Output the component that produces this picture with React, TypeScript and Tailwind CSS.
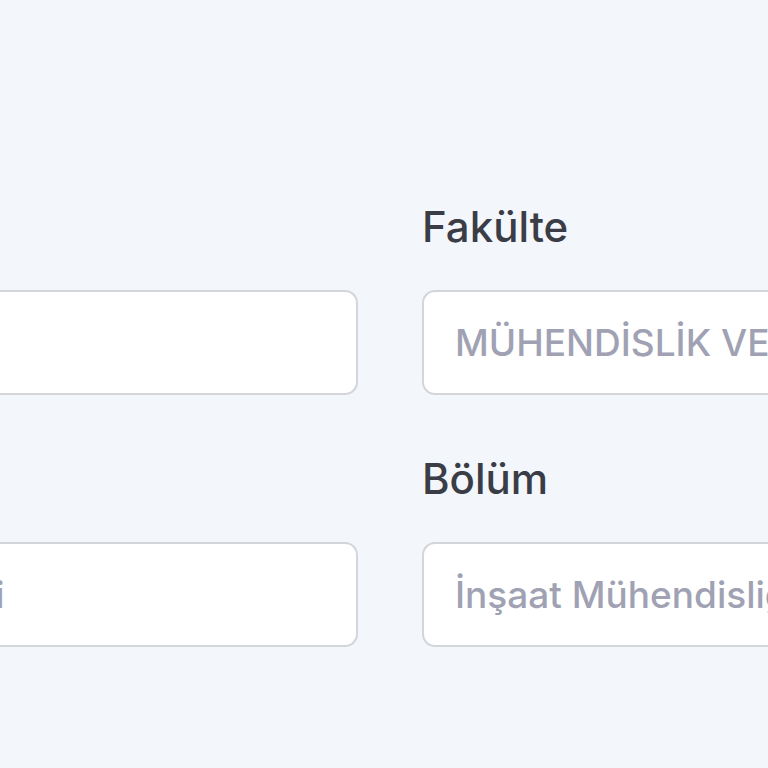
export default function App() {
  const fields = [
    { label: "Öğrenci Numarası", placeholder: "" },
    { label: "Fakülte", placeholder: "MÜHENDİSLİK VE DOĞA BİLİMLERİ FAKÜLTESİ" },
    { label: "Üniversite", placeholder: "Sakarya Üniversitesi" },
    { label: "Bölüm", placeholder: "İnşaat Mühendisliği" },
  ];

  return (
    <div
      className="min-h-[768px] w-[768px] overflow-hidden bg-[#f3f6fa]"
      style={{ fontFamily: "Inter, 'Noto Sans', sans-serif" }}
    >
      <div className="-ml-[390px] grid w-[1560px] grid-cols-2 gap-x-[64px] gap-y-[54px] pt-[197px]">
        {fields.map((f) => (
          <div key={f.label} className="flex flex-col gap-[33px]">
            <label className="text-[42px] leading-[60px] font-medium text-[#3a3d46]">
              {f.label}
            </label>
            <input
              placeholder={f.placeholder}
              className="h-[105px] w-full rounded-[13px] border-[2.5px] border-[#d3d5db] bg-white px-[31px] text-[37px] font-medium text-[#3a3d46] placeholder:text-[#a0a2b4] focus:outline-none"
            />
          </div>
        ))}
      </div>
    </div>
  );
}
